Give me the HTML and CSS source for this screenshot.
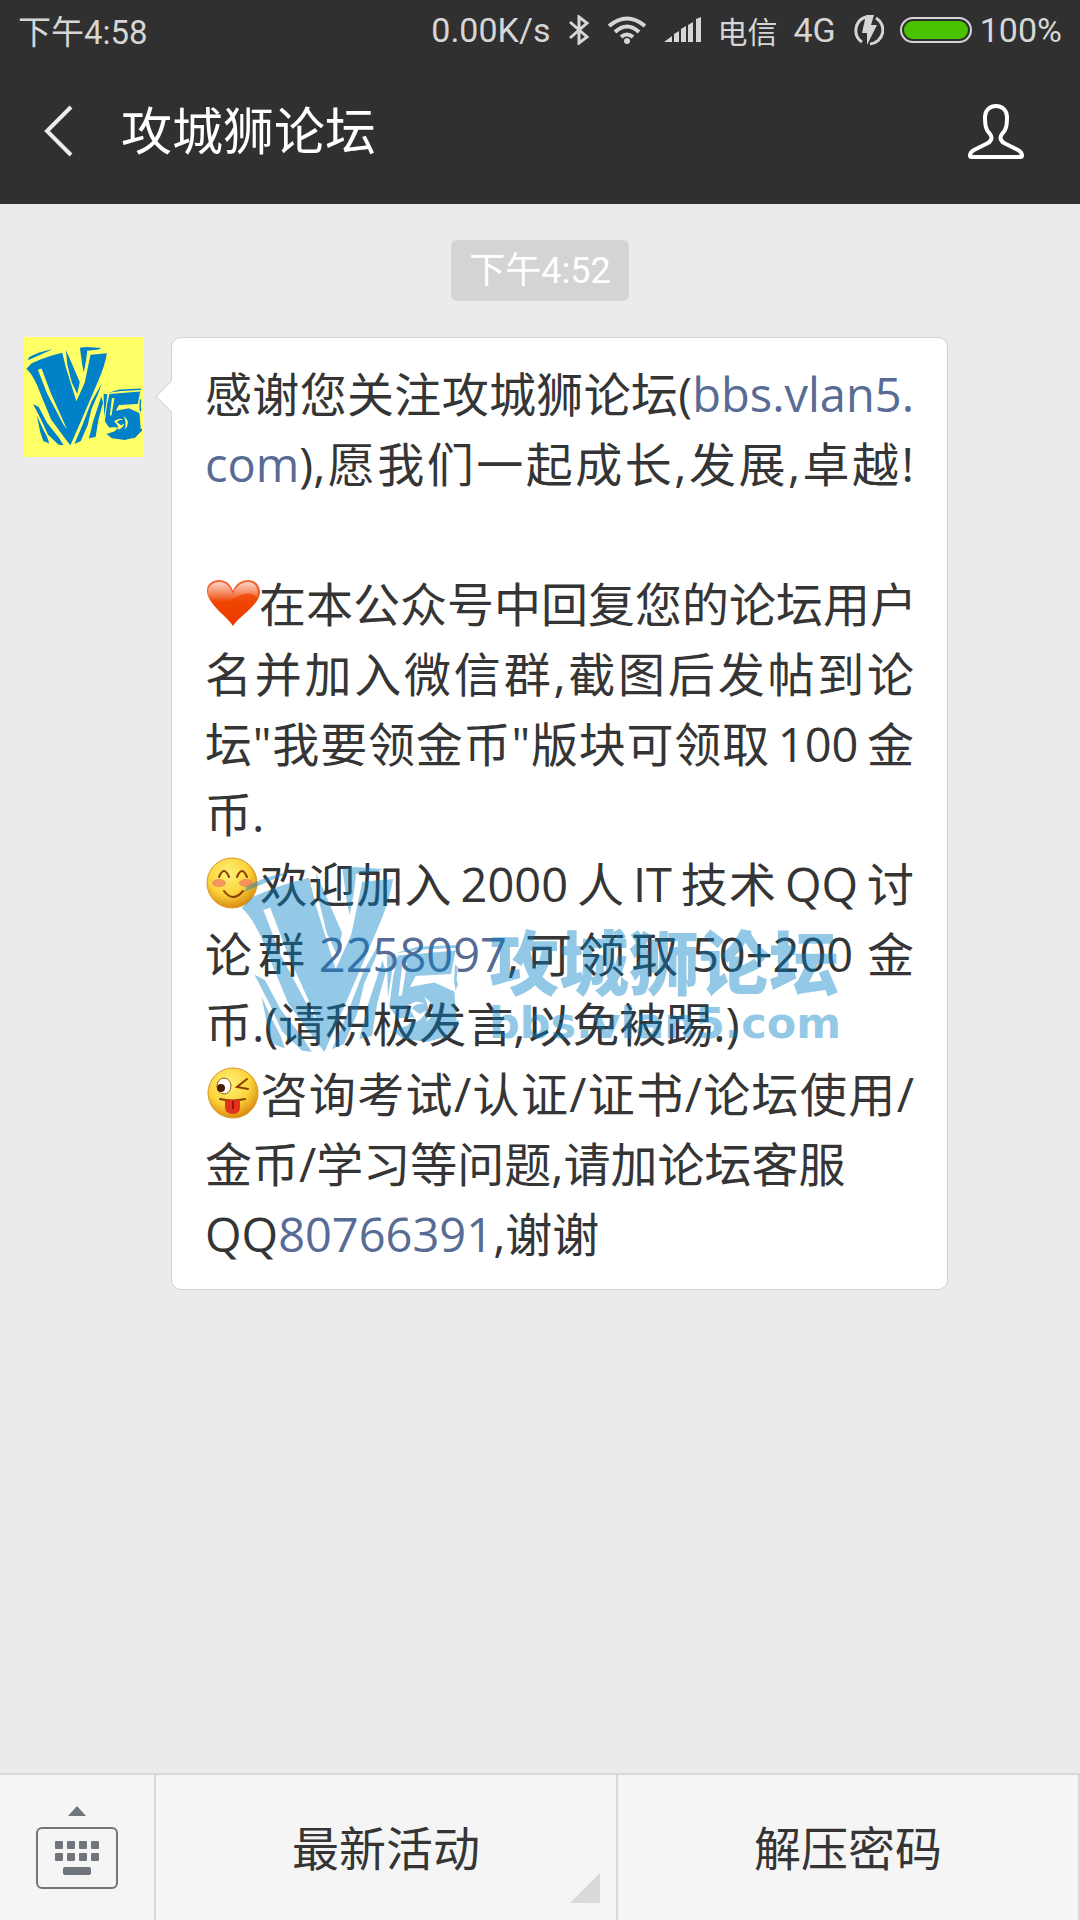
FILE: index.html
```
<!DOCTYPE html>
<html lang="zh-CN">
<head>
    <meta charset="UTF-8">
    <meta name="viewport" content="width=device-width, initial-scale=1.0">
    <title>攻城狮论坛</title>
    <link rel="stylesheet" href="styles.css">
</head>
<body>
    <!-- V5 logo and emoji shapes, reused below -->
    <svg class="defs" width="0" height="0" aria-hidden="true">
        <symbol id="logo" viewBox="120 80 656 556">
            <path d="M130 155L137 138Q190 108 270 93L195 127Z"/>
            <path fill-rule="evenodd" d="M122 203L152 172Q230 134 325 112L346 198L405 387L452 282L485 124L578 116Q565 190 530 268L435 490L371 636L336 590L262 490L205 352Q165 240 122 203ZM187 209L208 202L260 340L352 545L330 515L240 345Z"/>
            <path d="M346 98L362 134L424 278L410 346L378 278L354 180Z"/>
            <path d="M425 84L462 80L546 86L530 94L466 101L460 155L447 224L438 180Z"/>
            <path d="M160 403L192 420L240 510L305 592L333 636L303 632L244 575L205 490Z"/>
            <path d="M182 470L212 535L240 590L252 626L218 612L200 560Z"/>
            <path d="M548 288L528 345L490 432L470 520L430 612L394 628L440 520L490 390Z"/>
            <path d="M546 360L556 395L530 490L514 588L476 598L500 500Z"/>
            <path d="M559 345L580 347L573 405L562 472Z"/>
            <path d="M585 339L650 320L772 314L770 323L660 329Z"/>
            <path fill-rule="evenodd" d="M592 346L766 331L752 402L646 408L628 441L702 427L762 454L770 555L738 590L680 606L606 596L575 572L622 556L645 532L590 535L566 500L578 410ZM606 368L620 369L604 466L594 468ZM618 500Q650 475 672 493Q650 487 634 505L658 522L676 512Q670 538 640 548Q650 530 618 500ZM670 470Q706 492 692 530L678 547Q692 500 670 470Z"/>
            <path d="M764 373L772 380L769 420L773 432L766 452L761 425Z"/>
            <path d="M774 540L778 550L735 594L722 597L750 562Z"/>
        </symbol>
        <radialGradient id="face" cx="42%" cy="32%" r="68%">
            <stop offset="0" stop-color="#fff27a"/>
            <stop offset="0.6" stop-color="#fbd43c"/>
            <stop offset="1" stop-color="#dc8d12"/>
        </radialGradient>
        <linearGradient id="heart" x1="0" y1="0" x2="0" y2="1">
            <stop offset="0" stop-color="#f3683b"/>
            <stop offset="0.5" stop-color="#f04400"/>
            <stop offset="1" stop-color="#e83a00"/>
        </linearGradient>
        <linearGradient id="shine" x1="0" y1="0" x2="0" y2="1">
            <stop offset="0" stop-color="#fff" stop-opacity="0.7"/>
            <stop offset="1" stop-color="#fff" stop-opacity="0"/>
        </linearGradient>
    </svg>

    <header>
        <div class="status">
            <span class="clock">下午4:58</span>
            <span class="speed">0.00K/s</span>
            <svg class="bluetooth" width="22" height="30" viewBox="0 0 22 30" fill="none" stroke="#d6d6d6" stroke-width="3">
                <path d="M2 7L19 22L11 28V2L19 8L2 23"/>
            </svg>
            <svg class="wifi" width="38" height="28" viewBox="0 0 38 28" fill="none" stroke="#d6d6d6" stroke-width="4">
                <path d="M1 10Q19-5 37 10M7 16Q19 5 31 16M13 21Q19 16 25 21"/>
                <circle cx="19" cy="25" r="3" fill="#d6d6d6" stroke="none"/>
            </svg>
            <svg class="signal" width="37" height="26" viewBox="0 0 37 26" fill="#d6d6d6">
                <path d="M0 25L8 19V25ZM10 17L15 14V25H10ZM17 12L22 9V25H17ZM24 8L29 5V25H24ZM32 2L37 0V25H32Z"/>
            </svg>
            <span class="carrier">电信</span>
            <span class="network">4G</span>
            <svg class="charge" width="30" height="32" viewBox="0 0 30 32" fill="none" stroke="#d6d6d6" stroke-width="3">
                <path d="M8 28A14 14 0 0 1 12 3M22 4A14 14 0 0 1 16 30"/>
                <path d="M12 1H20L17 11H23L13 31V19H8Z" fill="#d6d6d6" stroke="none"/>
            </svg>
            <svg class="battery" width="72" height="26" viewBox="0 0 72 26">
                <rect x="1" y="1" width="70" height="24" rx="12" fill="none" stroke="#d6d6d6" stroke-width="2"/>
                <rect x="4" y="4" width="64" height="18" rx="9" fill="#49c200"/>
            </svg>
            <span>100%</span>
        </div>
        <div class="titlebar">
            <button class="icon-button" type="button" aria-label="返回">
                <svg width="30" height="52" viewBox="0 0 30 52" fill="none" stroke="#ededed" stroke-width="4">
                    <path d="M27 2L3 26L27 50"/>
                </svg>
            </button>
            <h1>攻城狮论坛</h1>
            <button class="icon-button" type="button" aria-label="公众号资料">
                <svg width="58" height="56" viewBox="0 0 58 56" fill="none" stroke="#fff" stroke-width="4" stroke-linejoin="round">
                    <path d="M29 3C22 3 18 8 18 14C18 23 19 27 23 31C26 35 24 38 21 40L7 47Q3 49 3 53Q3 54 5 54H53Q55 54 55 53Q55 49 51 47L37 40C34 38 32 35 35 31C39 27 40 23 40 14C40 8 36 3 29 3Z"/>
                </svg>
            </button>
        </div>
    </header>

    <main>
        <time class="stamp">下午4:52</time>
        <div class="message">
            <div class="avatar">
                <svg viewBox="120 80 656 556"><use href="#logo" x="120" y="80" width="656" height="556"/></svg>
            </div>
            <div class="bubble">
                <p class="fill">感谢您关注攻城狮论坛(<a href="#">bbs.vlan5.</a></p>
                <p class="fill"><a href="#">com</a>),愿我们一起成长,发展,卓越!</p>
                <p class="blank"></p>
                <p class="fill"><svg class="emoji" viewBox="3 0 54 52">
                    <path d="M31 49C27 41 5 27 5 14C5 7 10 3 17 3C25 3 29 8 31 14C33 8 38 3 46 3C53 3 58 8 58 15C58 28 36 40 31 49Z" fill="url(#heart)"/>
                    <path d="M7 21C3 12 9 5 17 5C25 5 29 11 31 17C33 10 39 5 46 5C53 5 58 12 55 20C47 13 38 18 31 22C22 26 15 26 7 21Z" fill="url(#shine)"/>
                </svg>在本公众号中回复您的论坛用户</p>
                <p class="fill">名并加入微信群,截图后发帖到论</p>
                <p class="fill">坛"我要领金币"版块可领取&thinsp;100&thinsp;金</p>
                <p>币.</p>
                <p class="fill"><svg class="emoji" viewBox="3 0 54 52">
                    <circle cx="30" cy="26" r="25" fill="url(#face)" stroke="#dd9526"/>
                    <g fill="#f5835e" opacity="0.8">
                        <ellipse cx="17" cy="26" rx="7" ry="4"/>
                        <ellipse cx="44" cy="26" rx="7" ry="4"/>
                    </g>
                    <path d="M17 20Q22 8 27 20M35 20Q40 8 45 20M22 34Q31 46 41 34" fill="none" stroke="#8d3d00" stroke-width="2" stroke-linecap="round"/>
                </svg>欢迎加入&thinsp;2000&thinsp;人&thinsp;IT&thinsp;技术&thinsp;QQ&thinsp;讨</p>
                <p class="fill">论群&thinsp;<a href="#">2258097</a>,可领取&thinsp;50+200&thinsp;金</p>
                <p>币.(请积极发言,以免被踢.)</p>
                <p class="fill"><svg class="emoji" viewBox="3 0 54 52">
                    <circle cx="31" cy="26" r="25" fill="url(#face)" stroke="#dd9526"/>
                    <ellipse cx="22" cy="19" rx="7" ry="8" fill="#fff" stroke="#9a5b10" stroke-width="1"/>
                    <circle cx="19" cy="21" r="4" fill="#4a1c00"/>
                    <path d="M45 12L35 20L46 22M18 32Q30 35 43 32" fill="none" stroke="#8d3d00" stroke-width="2" stroke-linecap="round"/>
                    <path d="M23 33H38V40Q38 47 31 47Q23 47 23 40Z" fill="#e3321c"/>
                    <path d="M31 34V42" stroke="#9e1208" stroke-width="2"/>
                </svg>咨询考试/认证/证书/论坛使用/</p>
                <p>金币/学习等问题,请加论坛客服</p>
                <p>QQ<a href="#">80766391</a>,谢谢</p>

                <div class="watermark">
                    <svg viewBox="120 80 656 556"><use href="#logo" x="120" y="80" width="656" height="556"/></svg>
                    <div class="brand">
                        <strong>攻城狮论坛</strong>
                        <span>bbs.vlan5.com</span>
                    </div>
                </div>
            </div>
        </div>
    </main>

    <footer>
        <button class="keyboard" type="button" aria-label="切换键盘">
            <svg width="82" height="84" viewBox="0 0 82 84" fill="#70757b">
                <path d="M41 0L50 10H32Z"/>
                <rect x="1" y="22" width="80" height="60" rx="5" fill="none" stroke="#70757b" stroke-width="2"/>
                <g stroke="#70757b" stroke-width="2" stroke-linejoin="round">
                    <path d="M20 36h6v6h-6zM32 36h6v6h-6zM44 36h6v6h-6zM56 36h6v6h-6zM20 48h6v6h-6zM32 48h6v6h-6zM44 48h6v6h-6zM56 48h6v6h-6z"/>
                </g>
                <rect x="27" y="61" width="28" height="8" rx="2"/>
            </svg>
        </button>
        <button class="menu more" type="button">最新活动</button>
        <button class="menu" type="button">解压密码</button>
    </footer>
</body>
</html>
```
FILE: styles.css
```
* {
    box-sizing: border-box;
}
body {
    font-family: "Open Sans", "Noto Sans CJK SC", sans-serif;
    margin: 0;
    min-height: 100vh;
    display: flex;
    flex-direction: column;
    background: #ebebeb;
    color: #353535;
}
button {
    font: inherit;
    color: inherit;
    border: none;
    background: none;
    padding: 0;
    cursor: pointer;
}
svg {
    display: block;
    flex-shrink: 0;
}
.defs {
    position: absolute;
}
header {
    background: #303030;
    color: #fff;
}
.status {
    display: flex;
    align-items: center;
    height: 60px;
    padding: 0 18px;
    font-family: Roboto, "Noto Sans CJK SC", sans-serif;
    font-size: 34px;
    color: #d6d6d6;
}
.clock {
    margin-right: auto;
    font-size: 33px;
}
.bluetooth,
.wifi,
.signal {
    margin-left: 18px;
}
.carrier {
    margin-left: 16px;
    font-size: 30px;
}
.network {
    margin-left: 16px;
}
.charge {
    margin-left: 18px;
}
.battery {
    margin: 0 8px 0 16px;
}
.titlebar {
    display: flex;
    align-items: center;
    height: 144px;
    padding: 0 55px 2px 44px;
}
h1 {
    flex: 1;
    margin: 0 0 0 47px;
    padding-bottom: 6px;
    font-family: "Noto Sans CJK SC", sans-serif;
    font-size: 51px;
    font-weight: 400;
}
main {
    flex: 1;
    padding: 36px 24px;
}
.stamp {
    display: block;
    width: fit-content;
    margin: 0 auto 36px;
    padding: 2px 18px 0;
    border-radius: 6px;
    background: #d4d4d4;
    color: #fff;
    font-family: Roboto, "Noto Sans CJK SC", sans-serif;
    font-size: 36px;
    line-height: 59px;
}
.message {
    display: flex;
    align-items: flex-start;
    gap: 27px;
    margin-right: 108px;
}
.avatar {
    flex: none;
    width: 120px;
    height: 120px;
    padding: 10px 2px;
    background: #ffff66;
    fill: #0081c8;
}
.bubble {
    position: relative;
    flex: 1;
    min-width: 0;
    padding: 21px 33px 20px;
    border: 1px solid #d2d2d2;
    border-radius: 10px;
    background: #fff;
    font-size: 47px;
    line-height: 70px;
}
.bubble::before {
    content: "";
    position: absolute;
    left: -12px;
    top: 47px;
    width: 22px;
    height: 22px;
    border: 1px solid #d2d2d2;
    border-width: 0 0 1px 1px;
    background: #fff;
    transform: rotate(45deg);
}
.bubble p {
    margin: 0;
    height: 70px;
    white-space: nowrap;
}
.bubble .fill {
    text-align: justify;
    text-align-last: justify;
}
.bubble a {
    color: #576b95;
    text-decoration: none;
}
.emoji {
    display: inline-block;
    width: 54px;
    height: 52px;
    vertical-align: -7px;
    overflow: visible;
}
.watermark {
    position: absolute;
    left: 69px;
    top: 529px;
    display: flex;
    gap: 30px;
    opacity: 0.42;
    color: #0081c8;
    fill: #0081c8;
    pointer-events: none;
}
.watermark svg {
    width: 218px;
    height: 185px;
}
.brand {
    display: flex;
    flex-direction: column;
    padding-top: 58px;
}
.brand strong {
    font-family: "Noto Sans CJK SC", sans-serif;
    font-size: 70px;
    font-weight: 900;
    line-height: 70px;
}
.brand span {
    font-family: "DejaVu Sans", sans-serif;
    font-size: 43px;
    font-weight: bold;
    line-height: 56px;
}
footer {
    display: flex;
    height: 147px;
    border-top: 2px solid #d9d9d9;
    background: #f5f5f5;
}
.keyboard {
    display: flex;
    align-items: center;
    justify-content: center;
    width: 156px;
    border-right: 2px solid #d9d9d9;
}
.menu {
    position: relative;
    flex: 1;
    padding-bottom: 4px;
    border-right: 2px solid #d9d9d9;
    font-size: 47px;
}
.more::after {
    content: "";
    position: absolute;
    right: 16px;
    bottom: 17px;
    border-left: 30px solid transparent;
    border-bottom: 30px solid #d9d9d9;
}
```
